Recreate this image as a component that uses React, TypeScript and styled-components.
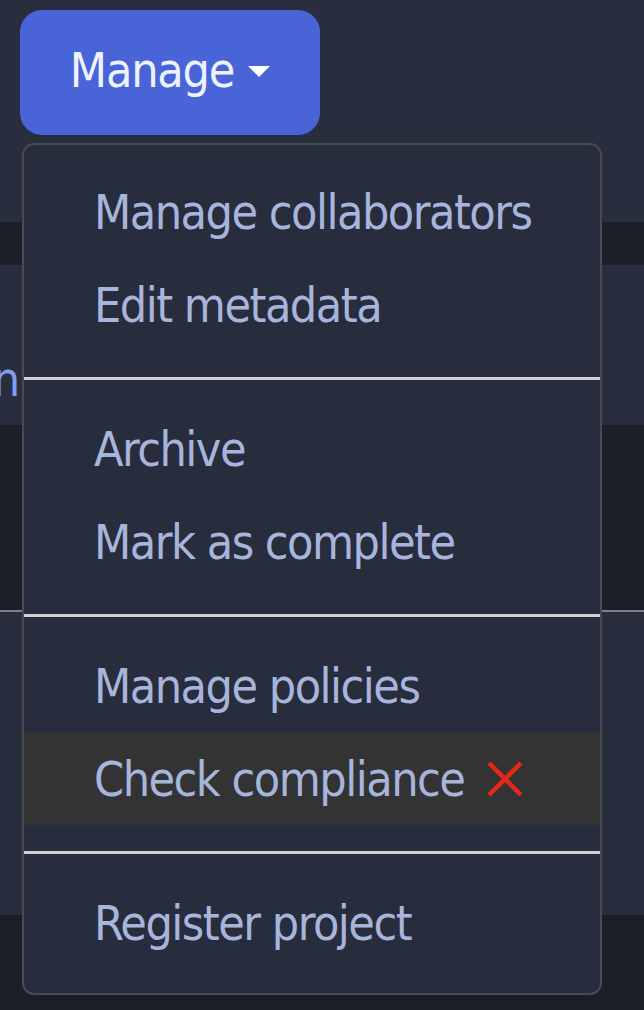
import React from 'react';
import styled, { createGlobalStyle } from 'styled-components';

const GlobalStyle = createGlobalStyle`
    html, body {
        margin: 0;
        padding: 0;
        background: #1c1f28;
    }
    body {
        font-family: "Liberation Sans Narrow", "DejaVu Sans Condensed", "Roboto", sans-serif;
    }
`;

const Page = styled.div`
    position: relative;
    width: 644px;
    height: 1010px;
    overflow: hidden;
    display: flex;
    flex-direction: column;
`;

const Band = styled.div<{ $dark?: boolean; $height: number; $line?: boolean }>`
    height: ${props => props.$height}px;
    flex-shrink: 0;
    background-color: ${props => props.$dark ? '#1c1f28' : '#292e3f'};
    border-top: ${props => props.$line ? '2px solid #7d8089' : 'none'};
    display: flex;
    align-items: center;
`;

const Header = styled(Band)`
    align-items: flex-start;
    padding: 10px 0 0 20px;
    box-sizing: border-box;
`;

const ManageButton = styled.button`
    width: 300px;
    height: 125px;
    border: none;
    border-radius: 22px;
    background-color: #4864d7;
    color: #eef1ff;
    font-family: inherit;
    font-size: 48px;
    letter-spacing: -1.2px;
    display: flex;
    align-items: center;
    justify-content: center;
    gap: 14px;
    padding: 0 0 6px;
    cursor: pointer;
`;

const Caret = styled.span`
    width: 0;
    height: 0;
    border-left: 11px solid transparent;
    border-right: 11px solid transparent;
    border-top: 11px solid #ffffff;
    margin-top: 4px;
`;

const CutText = styled.div`
    width: 20px;
    overflow: hidden;
    display: flex;
    justify-content: flex-end;
    font-size: 48px;
    color: #7f9ef2;
    margin-top: 68px;
`;

const Menu = styled.div`
    position: absolute;
    top: 143px;
    left: 22px;
    width: 580px;
    box-sizing: border-box;
    padding: 20px 0 24px;
    background-color: #282d3d;
    border: 2px solid #4a4b4f;
    border-radius: 12px;
    display: flex;
    flex-direction: column;
`;

const Item = styled.div<{ $active?: boolean }>`
    height: 93px;
    padding-left: 70px;
    display: flex;
    align-items: center;
    gap: 22px;
    font-size: 48px;
    letter-spacing: -1.5px;
    color: #a7b5dc;
    background-color: ${props => props.$active ? '#333333' : 'transparent'};
    white-space: nowrap;
`;

const Divider = styled.hr`
    margin: 26px 0 22px;
    height: 3px;
    border: none;
    background-color: #cfcfd2;
`;

const Cross = () => (
    <svg width="38" height="38" viewBox="0 0 38 38">
        <line x1="3" y1="3" x2="35" y2="35" stroke="#e3281b" strokeWidth="4.5" />
        <line x1="35" y1="3" x2="3" y2="35" stroke="#e3281b" strokeWidth="4.5" />
    </svg>
);

const App: React.FC = () => {
    return (
        <>
            <GlobalStyle />
            <Page>
                <Header $height={222}>
                    <ManageButton>
                        Manage <Caret />
                    </ManageButton>
                </Header>
                <Band $dark $height={43} />
                <Band $height={160}>
                    <CutText>Open</CutText>
                </Band>
                <Band $dark $height={185} />
                <Band $line $height={303} />
                <Band $dark $height={97} />
                <Menu>
                    <Item>Manage collaborators</Item>
                    <Item>Edit metadata</Item>
                    <Divider />
                    <Item>Archive</Item>
                    <Item>Mark as complete</Item>
                    <Divider />
                    <Item>Manage policies</Item>
                    <Item $active>
                        Check compliance <Cross />
                    </Item>
                    <Divider />
                    <Item>Register project</Item>
                </Menu>
            </Page>
        </>
    );
};

export default App;
